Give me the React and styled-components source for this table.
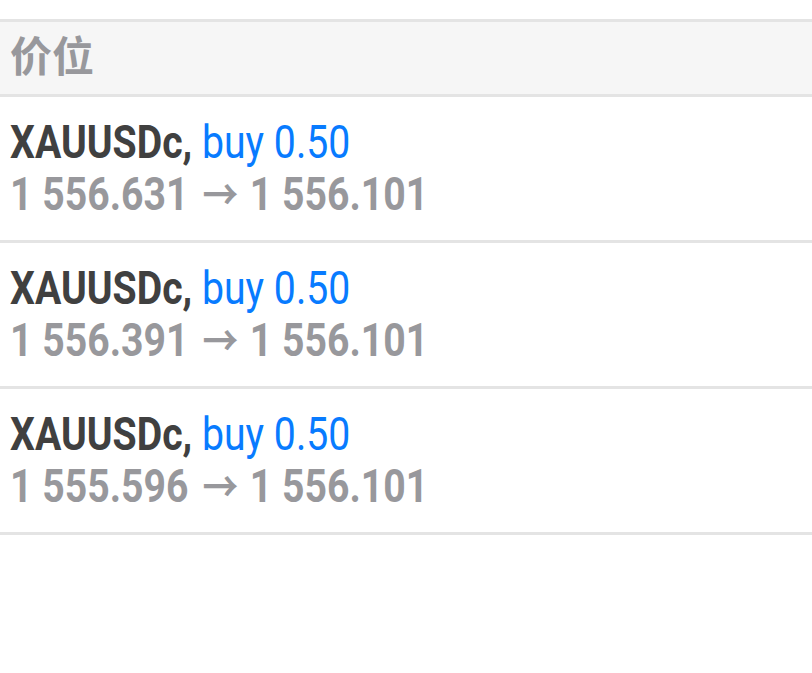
import React from 'react';
import styled, { createGlobalStyle } from 'styled-components';

const GlobalStyle = createGlobalStyle`
  html, body {
    margin: 0;
    padding: 0;
    background: #ffffff;
  }
  body {
    font-family: Roboto, "Noto Sans CJK SC", sans-serif;
  }
`;

const Page = styled.div`
  width: 812px;
  height: 673px;
  background: #ffffff;
  padding-top: 19px;
  box-sizing: border-box;
  overflow: hidden;
`;

const SectionHeader = styled.div`
  height: 78px;
  box-sizing: border-box;
  display: flex;
  align-items: center;
  padding: 0 10px 9px;
  background: #f6f6f6;
  border-top: 3px solid #e4e4e4;
  border-bottom: 3px solid #e4e4e4;
  color: #98989c;
  font-family: "Noto Sans CJK SC", sans-serif;
  font-weight: 700;
  font-size: 42px;
  line-height: 1;
`;

const Row = styled.div`
  padding: 19px 10px 20px;
  border-bottom: 3px solid #e4e4e4;
  font-family: Roboto, sans-serif;
  font-weight: 700;
  font-size: 46px;
  line-height: 52px;
`;

const Line = styled.div`
  height: 52px;
  white-space: nowrap;
  transform: scaleX(0.852);
  transform-origin: left center;
  color: ${(p) => p.color || '#404040'};
`;

const Blue = styled.span`
  color: #087bff;
  font-weight: 400;
`;

const Arrow = styled.span`
  display: inline-block;
  margin: 0 2px 0 5px;
  font-family: "Noto Sans CJK SC", sans-serif;
  font-weight: 700;
  font-size: 42px;
  line-height: 30px;
`;

const orders = [
  { symbol: 'XAUUSDc', side: 'buy 0.50', from: '1 556.631', to: '1 556.101' },
  { symbol: 'XAUUSDc', side: 'buy 0.50', from: '1 556.391', to: '1 556.101' },
  { symbol: 'XAUUSDc', side: 'buy 0.50', from: '1 555.596', to: '1 556.101' },
];

export default function App() {
  return (
    <>
      <GlobalStyle />
      <Page>
        <SectionHeader>价位</SectionHeader>
        {orders.map((o, i) => (
          <Row key={i}>
            <Line>
              {o.symbol}, <Blue>{o.side}</Blue>
            </Line>
            <Line color="#98989c">
              {o.from} <Arrow>→</Arrow> {o.to}
            </Line>
          </Row>
        ))}
      </Page>
    </>
  );
}
